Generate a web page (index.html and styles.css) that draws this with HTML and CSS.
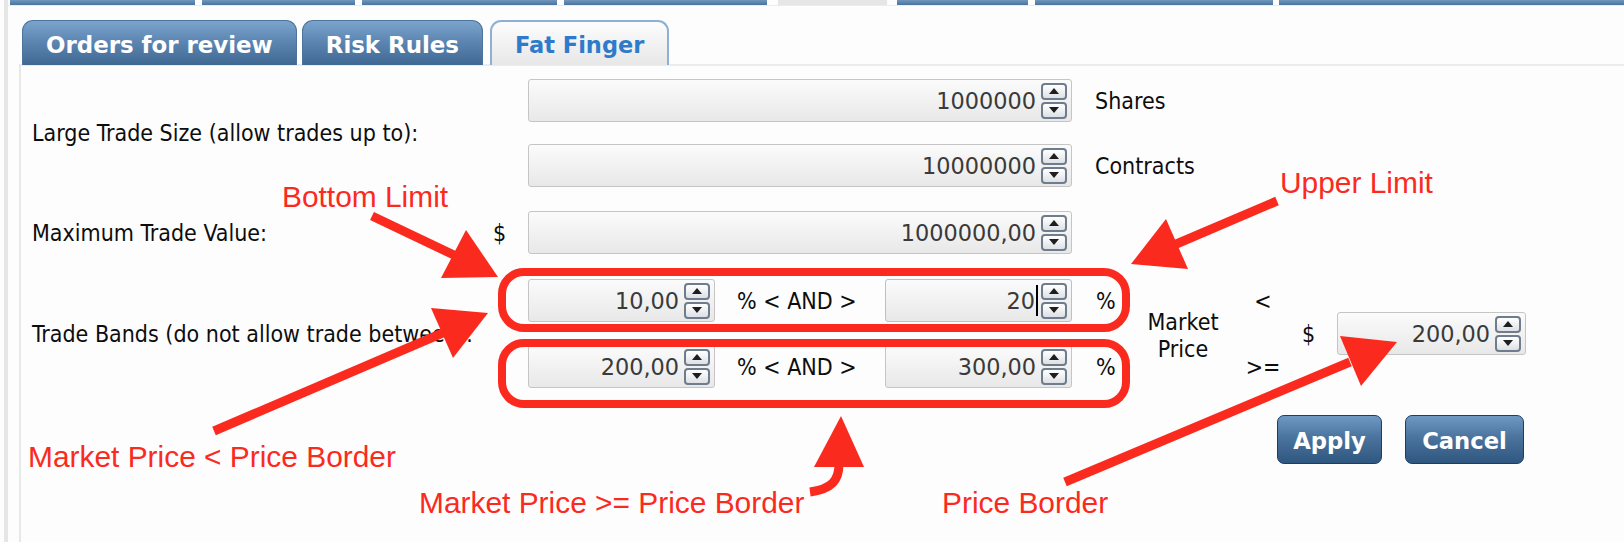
FILE: index.html
```html
<!DOCTYPE html>
<html>
<head>
<meta charset="utf-8">
<title>Fat Finger</title>
<link rel="stylesheet" href="styles.css">
</head>
<body>
<div class="frame">
  <div class="topnav">
    <span class="seg s1"></span>
    <span class="seg s2"></span>
    <span class="seg s3"></span>
    <span class="seg s4"></span>
    <span class="seg s5 light"></span>
    <span class="seg s6"></span>
    <span class="seg s7"></span>
    <span class="seg s8"></span>
  </div>

  <div class="tabs">
    <div class="tab">Orders for review</div>
    <div class="tab">Risk Rules</div>
    <div class="tab active">Fat Finger</div>
  </div>

  <div class="panel">
    <div class="section sec-size">
      <div class="label">Large Trade Size (allow trades up to):</div>
      <div class="cur"></div>
      <div class="stack">
        <div class="line">
          <div class="spin long"><span class="val">1000000</span><span class="arrows"><span class="up"></span><span class="down"></span></span></div>
          <span class="unit">Shares</span>
        </div>
        <div class="line">
          <div class="spin long"><span class="val">10000000</span><span class="arrows"><span class="up"></span><span class="down"></span></span></div>
          <span class="unit">Contracts</span>
        </div>
      </div>
    </div>

    <div class="section sec-value">
      <div class="label">Maximum Trade Value:</div>
      <div class="cur">$</div>
      <div class="spin long"><span class="val">1000000,00</span><span class="arrows"><span class="up"></span><span class="down"></span></span></div>
    </div>

    <div class="section sec-bands">
      <div class="label">Trade Bands (do not allow trade between):</div>
      <div class="cur"></div>
      <div class="stack bands">
        <div class="line">
          <div class="spin short"><span class="val">10,00</span><span class="arrows"><span class="up"></span><span class="down"></span></span></div>
          <span class="op">% &lt; AND &gt;</span>
          <div class="spin short focus"><span class="val caret">20</span><span class="arrows"><span class="up"></span><span class="down"></span></span></div>
          <span class="pct">%</span>
        </div>
        <div class="line">
          <div class="spin short"><span class="val">200,00</span><span class="arrows"><span class="up"></span><span class="down"></span></span></div>
          <span class="op">% &lt; AND &gt;</span>
          <div class="spin short"><span class="val">300,00</span><span class="arrows"><span class="up"></span><span class="down"></span></span></div>
          <span class="pct">%</span>
        </div>
      </div>
      <div class="mp">Market<br>Price</div>
      <div class="cmp"><span>&lt;</span><span>&gt;=</span></div>
      <div class="cur2">$</div>
      <div class="spin price"><span class="val">200,00</span><span class="arrows"><span class="up"></span><span class="down"></span></span></div>
    </div>

    <div class="section sec-buttons">
      <button class="btn apply">Apply</button>
      <button class="btn cancel">Cancel</button>
    </div>
  </div>
</div>

<svg class="overlay" width="1624" height="542" viewBox="0 0 1624 542">
  <g fill="none" stroke="#fb2a1f" stroke-width="8">
    <rect x="502" y="272" width="624" height="56" rx="22"/>
    <rect x="502" y="343" width="624" height="61" rx="22"/>
  </g>
  <g stroke="#fb2a1f" stroke-width="9" fill="none">
    <line x1="372" y1="216" x2="456" y2="256"/>
    <line x1="214" y1="431" x2="445" y2="332"/>
    <line x1="1277" y1="201" x2="1174" y2="245"/>
    <line x1="1065" y1="482" x2="1350" y2="362"/>
    <path d="M839 464 C839 480 832 489 810 492"/>
  </g>
  <g fill="#fb2a1f">
    <polygon points="498,277 441,278 466,230"/>
    <polygon points="488,313 453,358 431,308"/>
    <polygon points="1131,264 1166,219 1188,269"/>
    <polygon points="1397,342 1361,386 1340,336"/>
    <polygon points="841,416 814,467 864,467"/>
  </g>
</svg>
<div class="note n-bottom">Bottom Limit</div>
<div class="note n-upper">Upper Limit</div>
<div class="note n-lt">Market Price &lt; Price Border</div>
<div class="note n-ge">Market Price &gt;= Price Border</div>
<div class="note n-border">Price Border</div>
</body>
</html>
```

FILE: styles.css
```css
* { box-sizing: border-box; }

html, body {
  margin: 0;
  padding: 0;
  background: #fdfdfd;
}

body {
  position: relative;
  width: 1624px;
  height: 542px;
  overflow: hidden;
  font-family: "DejaVu Sans Condensed", "DejaVu Sans", sans-serif;
  font-size: 23px;
  color: #0d0d0d;
}

.frame {
  margin-left: 4px;
  border-left: 4px solid #e6e6e6;
  height: 542px;
}

/* top navigation strip (cut off) */
.topnav {
  display: flex;
  height: 6px;
  padding-left: 2px;
  border-bottom: 1px solid #e9edf2;
}
.seg {
  height: 5px;
  background: linear-gradient(#7196bd, #4a729c);
  margin-right: 7px;
  flex: none;
}
.seg.light { background: #e6e6e6; }
.s1 { width: 185px; }
.s2 { width: 153px; }
.s3 { width: 195px; }
.s4 { width: 203px; margin-right: 11px; }
.s5 { width: 109px; margin-right: 10px; }
.s6 { width: 131px; }
.s7 { width: 238px; margin-right: 6px; }
.s8 { flex: 1; margin-right: 0; }

/* tabs */
.tabs {
  position: relative;
  z-index: 1;
  display: flex;
  gap: 5px;
  padding-left: 14px;
  margin-top: 14px;
  height: 45px;
}
.tab {
  display: flex;
  align-items: center;
  height: 45px;
  padding: 3px 23px 0;
  border: 1px solid #4d749d;
  border-bottom: none;
  border-radius: 11px 11px 0 0;
  background: linear-gradient(#7ba4cd, #5d87b2 45%, #3f6893);
  color: #fff;
  font-family: "DejaVu Sans", sans-serif;
  font-weight: bold;
  font-size: 22.9px;
  white-space: nowrap;
}
.tab.active {
  margin-left: 2px;
  border: 2px solid #8db0d4;
  border-bottom: none;
  background: linear-gradient(#fdfdfd, #e7e7e7);
  color: #2f7bcb;
  font-size: 22.5px;
}

/* panel */
.panel {
  margin-left: 11px;
  margin-top: -1px;
  border-left: 2px solid #e8e8e8;
  border-top: 2px solid #ececec;
  padding: 13px 0 0 11px;
  height: 478px;
}

.section {
  display: flex;
  align-items: center;
}
.sec-value { margin-top: 24px; }
.sec-bands { margin-top: 25px; }

.label {
  width: 461px;
  flex: none;
  white-space: nowrap;
}
.cur {
  width: 35px;
  flex: none;
}

.stack {
  display: flex;
  flex-direction: column;
  gap: 22px;
}
.stack.bands { gap: 23px; }

.line {
  display: flex;
  align-items: center;
}

/* spinner input */
.spin {
  flex: none;
  height: 43px;
  display: flex;
  align-items: center;
  justify-content: flex-end;
  padding-right: 4px;
  border: 1px solid #c5c5c5;
  border-radius: 3px;
  background: linear-gradient(#fbfbfb, #e8e8e8);
}
.spin.long { width: 544px; }
.spin.short { width: 187px; }
.spin.price { width: 189px; }
.spin.focus { border-color: #a3c6e8; }

.val {
  font-family: "DejaVu Sans", sans-serif;
  font-size: 22.4px;
  color: #3a3a3a;
  margin-right: 5px;
  display: flex;
  align-items: center;
}
.val.caret { margin-right: 3px; }
.val.caret::after {
  content: "";
  width: 2px;
  height: 31px;
  background: #000;
  margin-left: 1px;
}

.arrows {
  display: flex;
  flex-direction: column;
  gap: 2px;
}
.arrows span {
  width: 26px;
  height: 17px;
  border: 2px solid #6e7c8b;
  border-radius: 4px;
  background: linear-gradient(#ffffff, #dde1e5);
  display: flex;
  align-items: center;
  justify-content: center;
}
.arrows .up::after {
  content: "";
  border-left: 5px solid transparent;
  border-right: 5px solid transparent;
  border-bottom: 6px solid #1e1e1e;
}
.arrows .down::after {
  content: "";
  border-left: 5px solid transparent;
  border-right: 5px solid transparent;
  border-top: 6px solid #1e1e1e;
}

.unit { margin-left: 23px; }

.op {
  width: 170px;
  flex: none;
  padding-left: 22px;
  white-space: nowrap;
}
.pct {
  margin-left: 24px;
  width: 19px;
  flex: none;
}

.mp {
  width: 72px;
  margin-left: 32px;
  flex: none;
  text-align: center;
  line-height: 27px;
  margin-top: 4px;
}
.cmp {
  width: 36px;
  margin-left: 26px;
  flex: none;
  display: flex;
  flex-direction: column;
  align-items: center;
  gap: 33px;
  line-height: 33px;
  margin-top: 2px;
}
.cur2 {
  width: 35px;
  margin-left: 21px;
  flex: none;
}

/* buttons */
.sec-buttons {
  margin-top: 27px;
  width: 1492px;
  justify-content: flex-end;
  gap: 23px;
}
.btn {
  height: 49px;
  padding: 0;
  border: 1.5px solid #1f3d5e;
  border-radius: 7px;
  background: linear-gradient(#6f99c2, #4a739d 45%, #2f5780);
  color: #fff;
  font-family: "DejaVu Sans", sans-serif;
  font-weight: bold;
  font-size: 22.7px;
  display: flex;
  align-items: center;
  justify-content: center;
  padding-top: 2px;
}
.btn.apply { width: 105px; }
.btn.cancel { width: 119px; }

/* annotations */
.overlay {
  position: absolute;
  left: 0;
  top: 0;
  pointer-events: none;
}
.note {
  position: absolute;
  font-family: "Liberation Sans", Arial, sans-serif;
  font-size: 29.9px;
  line-height: 30px;
  color: #fb2a1f;
  white-space: nowrap;
}
.n-bottom { left: 282px; top: 182px; }
.n-upper { left: 1280px; top: 168px; }
.n-lt { left: 28px; top: 442px; }
.n-ge { left: 419px; top: 488px; }
.n-border { left: 942px; top: 488px; }
```
